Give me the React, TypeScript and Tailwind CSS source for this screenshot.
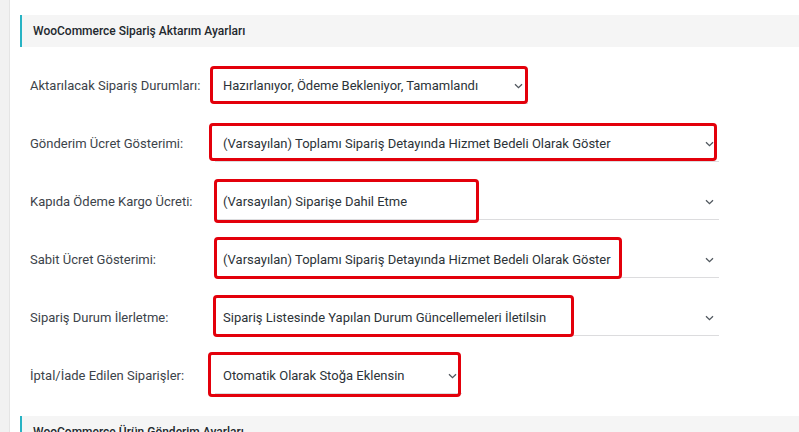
import React from "react";

type Row = {
  label: string;
  value: string;
  selectW: string;
  box: string;
};

// kırmızı kutular ekran görüntüsündeki el ile çizilmiş işaretler
const ROWS: Row[] = [
  { label: "Aktarılacak Sipariş Durumları:", value: "Hazırlanıyor, Ödeme Bekleniyor, Tamamlandı", selectW: "w-[313px]", box: "top-[9px] left-[190px] w-[318px] h-[38px]" },
  { label: "Gönderim Ücret Gösterimi:", value: "(Varsayılan) Toplamı Sipariş Detayında Hizmet Bedeli Olarak Göster", selectW: "w-[504px]", box: "top-[8px] left-[189px] w-[508px] h-[38px]" },
  { label: "Kapıda Ödeme Kargo Ücreti:", value: "(Varsayılan) Siparişe Dahil Etme", selectW: "w-[504px]", box: "top-[6px] left-[194px] w-[265px] h-[44px]" },
  { label: "Sabit Ücret Gösterimi:", value: "(Varsayılan) Toplamı Sipariş Detayında Hizmet Bedeli Olarak Göster", selectW: "w-[504px]", box: "top-[6px] left-[194px] w-[408px] h-[42px]" },
  { label: "Sipariş Durum İlerletme:", value: "Sipariş Listesinde Yapılan Durum Güncellemeleri İletilsin", selectW: "w-[504px]", box: "top-[6px] left-[193px] w-[361px] h-[42px]" },
  { label: "İptal/İade Edilen Siparişler:", value: "Otomatik Olarak Stoğa Eklensin", selectW: "w-[247px]", box: "top-[5px] left-[188px] w-[253px] h-[45px]" },
];

function Chevron() {
  return (
    <svg width="9" height="6" viewBox="0 0 9 6" className="shrink-0">
      <path d="M1 1.2 L4.5 4.6 L8 1.2" fill="none" stroke="#50575e" strokeWidth="1.3" />
    </svg>
  );
}

function SectionHeader({ title }: { title: string }) {
  return (
    <div className="h-[32px] flex items-center bg-[#f5f5f5] border-l-2 border-[#27b3c4] pl-[11px]">
      <span className="text-[12px] font-medium text-[#23282d]">{title}</span>
    </div>
  );
}

export default function App() {
  return (
    <div className="w-[799px] h-[432px] overflow-hidden flex bg-white" style={{ fontFamily: "Roboto, 'Noto Sans', sans-serif" }}>
      <div className="w-[10px] shrink-0 bg-[#f1f1f1] border-r border-[#e4e4e4]" />
      <div className="flex-1 pl-[10px] pt-[15px]">
        <SectionHeader title="WooCommerce Sipariş Aktarım Ayarları" />
        <div className="mt-[10px] flex flex-col">
          {ROWS.map((r) => (
            <div key={r.label} className="relative h-[58px] flex items-center">
              <div className="w-[195px] pl-[10px] text-[13px] text-[#3c434a]">{r.label}</div>
              <div className={`${r.selectW} h-[36px] flex items-center justify-between pl-[8px] pr-[5px] border-b border-[#dcdcde] text-[13px] text-[#2c3338]`}>
                <span className="truncate">{r.value}</span>
                <Chevron />
              </div>
              <div className={`absolute ${r.box} border-[3px] border-[#e3000b] rounded-[4px]`} />
            </div>
          ))}
        </div>
        <div className="mt-[11px]">
          <SectionHeader title="WooCommerce Ürün Gönderim Ayarları" />
        </div>
      </div>
    </div>
  );
}
